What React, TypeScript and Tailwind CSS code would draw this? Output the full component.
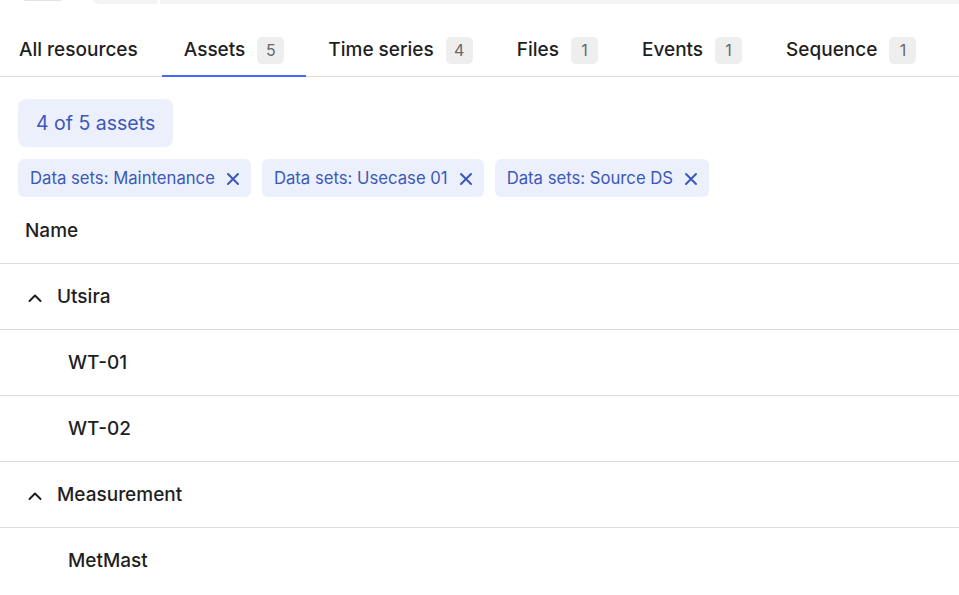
import React from "react";

const tabs: { label: string; count?: number; active?: boolean }[] = [
  { label: "All resources" },
  { label: "Assets", count: 5, active: true },
  { label: "Time series", count: 4 },
  { label: "Files", count: 1 },
  { label: "Events", count: 1 },
  { label: "Sequence", count: 1 },
];

const chips = ["Data sets: Maintenance", "Data sets: Usecase 01", "Data sets: Source DS"];

function XIcon() {
  return (
    <svg width="14" height="14" viewBox="0 0 14 14" fill="none">
      <path d="M2 2l10 10M12 2L2 12" stroke="currentColor" strokeWidth="2" strokeLinecap="round" />
    </svg>
  );
}

function ChevronUp() {
  return (
    <svg width="16" height="16" viewBox="0 0 16 16" fill="none">
      <path d="M2.5 11l5.5-5.5 5.5 5.5" stroke="#1f1f1f" strokeWidth="2" strokeLinecap="round" strokeLinejoin="round" />
    </svg>
  );
}

export default function App() {
  return (
    <div className="w-[959px] h-[595px] overflow-hidden bg-white font-['Inter',sans-serif] text-[#1f1f1f]">
      <div className="h-[5px] overflow-hidden flex">
        <div className="ml-[20px] w-[45px] h-[30px] -mt-[29px] rounded-md border border-[#e3e3e6] bg-white" />
        <div className="ml-[27px] w-[65px] h-[30px] -mt-[26px] rounded-bl-lg bg-[#f3f3f4]" />
        <div className="ml-[3px] flex-1 h-[4px] bg-[#f3f3f4]" />
      </div>
      <div className="mt-[18px] flex border-b border-[#dcdcdc] h-[54px]">
        {tabs.map((t, i) => (
          <div
            key={t.label}
            className={`-mb-px h-[54px] pt-[2px] flex items-center gap-[12px] border-b-2 text-[19px] font-medium ${
              i === 0 ? "pl-[19px] pr-[24px]" : "px-[22px]"
            } ${t.active ? "border-[#4a67fb]" : "border-transparent"}`}
          >
            <span>{t.label}</span>
            {t.count !== undefined && (
              <span className="h-[27px] w-[27px] rounded-[5px] bg-[#eeeeee] text-[#666666] text-[16px] font-normal flex items-center justify-center">
                {t.count}
              </span>
            )}
          </div>
        ))}
      </div>
      <div className="pl-[18px] pt-[22px]">
        <div className="inline-flex items-center h-[48px] pt-[2px] px-[18px] rounded-[8px] bg-[#ecf0fd] text-[#3b58b9] text-[19.5px]">
          4 of 5 assets
        </div>
        <div className="mt-[12px] flex gap-[11px]">
          {chips.map((c) => (
            <div
              key={c}
              className="h-[38px] pt-[2px] flex items-center gap-[11px] pl-[12px] pr-[11px] rounded-[6px] bg-[#ecf0fd] text-[#3b58b9] text-[16.7px]"
            >
              <span>{c}</span>
              <XIcon />
            </div>
          ))}
        </div>
      </div>
      <div className="h-[66px] pt-[2px] flex items-center pl-[25px] text-[19px] font-medium">Name</div>
      <div>
        <Row group label="Utsira" />
        <Row label="WT-01" />
        <Row label="WT-02" />
        <Row group label="Measurement" />
        <Row label="MetMast" />
      </div>
    </div>
  );
}

function Row({ label, group }: { label: string; group?: boolean }) {
  return (
    <div className="h-[66px] pt-[2px] border-t border-[#dcdcdc] flex items-center text-[19px] font-medium">
      {group ? (
        <div className="flex items-center pl-[27px] gap-[14px]">
          <ChevronUp />
          <span>{label}</span>
        </div>
      ) : (
        <span className="pl-[68px]">{label}</span>
      )}
    </div>
  );
}
